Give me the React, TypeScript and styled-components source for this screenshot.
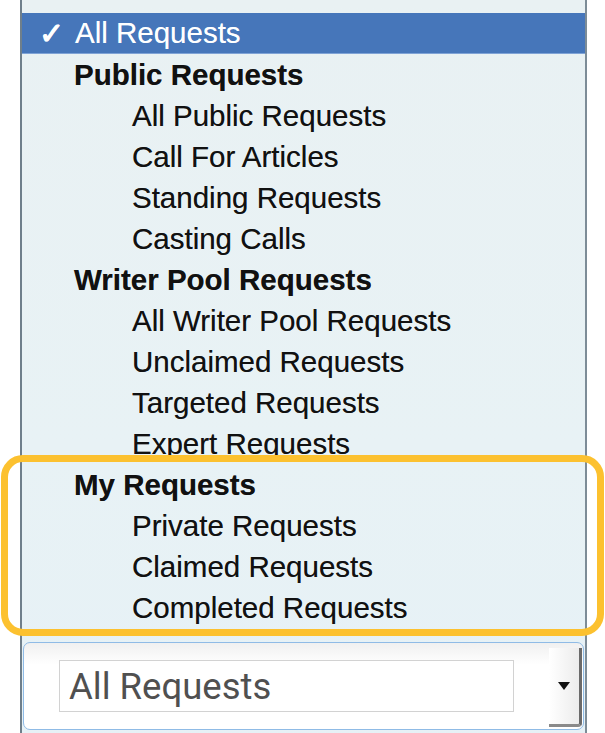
import React from "react";
import styled, { createGlobalStyle } from "styled-components";

const Global = createGlobalStyle`
  html, body { margin: 0; padding: 0; background: #ffffff; }
  body { font-family: "Liberation Sans", Arial, sans-serif; }
`;

const Page = styled.div`
  width: 605px;
  height: 733px;
  position: relative;
  overflow: hidden;
  background: #ffffff;
`;

const Panel = styled.div`
  margin-left: 20px;
  width: 563px;
  height: 733px;
  border-left: 2px solid #6f7f8b;
  border-right: 2px solid #7d8c97;
  background: linear-gradient(180deg, #e9f1f3 0%, #e8f2f5 60%, #e6f1f6 100%);
  display: flex;
  flex-direction: column;
  padding-top: 13px;
  box-sizing: content-box;
`;

const Menu = styled.ul`
  list-style: none;
  margin: 0;
  padding: 0;
  display: flex;
  flex-direction: column;
`;

const Item = styled.li<{ $level: number; $selected?: boolean }>`
  height: 41px;
  display: flex;
  align-items: center;
  box-sizing: border-box;
  padding-left: ${(p) => (p.$level === 0 ? 16 : p.$level === 1 ? 52 : 110)}px;
  font-family: "Liberation Sans", Arial, sans-serif;
  font-size: 29.5px;
  font-weight: ${(p) => (p.$level === 1 ? 700 : 400)};
  color: ${(p) => (p.$selected ? "#ffffff" : "#111111")};
  background: ${(p) => (p.$selected ? "#4676ba" : "transparent")};
  border-bottom: ${(p) => (p.$selected ? "1px solid #7fa3d6" : "none")};
  text-shadow: ${(p) =>
    p.$selected ? "0 0 0.5px rgba(255,255,255,0.6)" : "0 0 0.6px rgba(0,0,0,0.55)"};
  white-space: nowrap;
`;

const Check = styled.span`
  display: inline-block;
  width: 36px;
  font-size: 30px;
  font-weight: 700;
  margin-left: 1px;
`;

const SelectArea = styled.div`
  margin-top: 14px;
  margin-left: 1px;
  width: 561px;
  height: 88px;
  box-sizing: border-box;
  border: 1.5px solid #8fbbe6;
  border-radius: 7px;
  background: linear-gradient(180deg, #f0f0f0 0%, #ffffff 25%, #ffffff 100%);
  display: flex;
  align-items: center;
  padding-left: 35px;
`;

const Field = styled.div`
  width: 455px;
  height: 52px;
  box-sizing: border-box;
  border: 1.5px solid #d2d2d2;
  background: #ffffff;
  display: flex;
  align-items: center;
  padding-left: 9px;
  font-family: Roboto, "Liberation Sans", sans-serif;
  font-size: 36.5px;
  color: #505050;
`;

const ArrowButton = styled.div`
  margin-left: auto;
  align-self: stretch;
  width: 30px;
  margin-top: 5px;
  margin-bottom: 2px;
  margin-right: 1px;
  border-right: 3px solid #6a6a6a;
  border-bottom: 3px solid #8a8a8a;
  border-bottom-right-radius: 4px;
  background: linear-gradient(90deg, #ffffff 0%, #ececec 100%);
  display: flex;
  align-items: center;
  justify-content: center;
`;

const Highlight = styled.div`
  position: absolute;
  left: 1px;
  top: 455px;
  width: 603px;
  height: 181px;
  box-sizing: border-box;
  border: 7px solid #fcc12f;
  border-radius: 22px;
  pointer-events: none;
`;

type Entry = { label: string; level: number; selected?: boolean };

const entries: Entry[] = [
  { label: "All Requests", level: 0, selected: true },
  { label: "Public Requests", level: 1 },
  { label: "All Public Requests", level: 2 },
  { label: "Call For Articles", level: 2 },
  { label: "Standing Requests", level: 2 },
  { label: "Casting Calls", level: 2 },
  { label: "Writer Pool Requests", level: 1 },
  { label: "All Writer Pool Requests", level: 2 },
  { label: "Unclaimed Requests", level: 2 },
  { label: "Targeted Requests", level: 2 },
  { label: "Expert Requests", level: 2 },
  { label: "My Requests", level: 1 },
  { label: "Private Requests", level: 2 },
  { label: "Claimed Requests", level: 2 },
  { label: "Completed Requests", level: 2 },
];

export default function App() {
  return (
    <Page>
      <Global />
      <Panel>
        <Menu>
          {entries.map((e) => (
            <Item key={e.label} $level={e.level} $selected={e.selected}>
              {e.selected && <Check>✓</Check>}
              {e.label}
            </Item>
          ))}
        </Menu>
        <SelectArea>
          <Field>All Requests</Field>
          <ArrowButton>
            <svg width="12" height="8" viewBox="0 0 12 8">
              <path d="M0 0 H12 L6 8 Z" fill="#111" />
            </svg>
          </ArrowButton>
        </SelectArea>
      </Panel>
      <Highlight />
    </Page>
  );
}
